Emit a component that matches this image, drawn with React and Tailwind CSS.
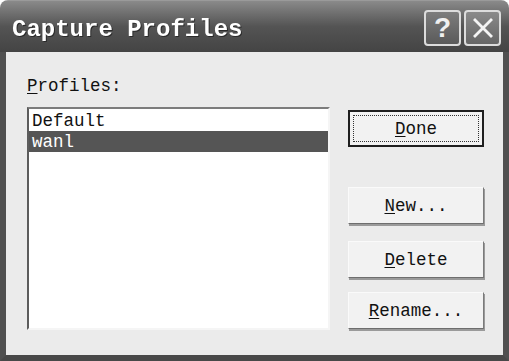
const mono = { fontFamily: '"Liberation Mono", "DejaVu Sans Mono", monospace' };

const DlgButton = ({ children, focused, className = "" }) => (
  <button
    type="button"
    className={`relative w-[136px] h-[37px] text-[17.5px] text-[#111] bg-[#f2f2f2] ${
      focused
        ? "border-2 border-[#1e1e1e]"
        : "border border-t-[#fafafa] border-l-[#fafafa] border-r-[#7a7a7a] border-b-[#6e6e6e] shadow-[1px_2px_0_#9a9a9a]"
    } ${className}`}
    style={mono}
  >
    {focused && (
      <span className="absolute inset-[3px] border border-dotted border-[#333]" />
    )}
    <span className="relative top-[1px]">{children}</span>
  </button>
);

const Key = ({ children }) => <span className="underline underline-offset-2">{children}</span>;

export default function App() {
  return (
    <div className="w-[509px] h-[361px] bg-white" style={mono}>
      <div className="flex flex-col w-full h-full rounded-t-[8px] overflow-hidden">
        {/* title bar */}
        <div className="h-[52px] flex items-center justify-between pl-[12px] pr-[8px] bg-gradient-to-b from-[#8a8a8a] via-[#545454] to-[#444] border-t border-[#9a9a9a]">
          <span className="relative top-[3px] text-[24px] font-bold text-white drop-shadow-[1px_1px_0_#2a2a2a]">
            Capture Profiles
          </span>
          <div className="flex gap-[3px] mt-[2px]">
            <div
              className="w-[37px] h-[36px] rounded-[4px] border-2 border-[#dcdcdc] bg-gradient-to-b from-[#7d7d7d] to-[#5a5a5a] flex items-center justify-center text-[#f0f0f0] text-[28px] font-bold leading-none"
              style={{ fontFamily: '"Liberation Sans", Arial, sans-serif' }}
            >
              ?
            </div>
            <div className="w-[37px] h-[36px] rounded-[4px] border-2 border-[#dcdcdc] bg-gradient-to-b from-[#8a8a8a] to-[#666] flex items-center justify-center">
              <svg width="22" height="22" viewBox="0 0 22 22">
                <path d="M3 3 L19 19 M19 3 L3 19" stroke="#f4f4f4" strokeWidth="2.8" strokeLinecap="square" />
              </svg>
            </div>
          </div>
        </div>

        {/* body */}
        <div className="flex-1 flex bg-[#ebebeb] border-x-[6px] border-b-[6px] border-x-[#505050] border-b-[#484848] pl-[21px] pt-[21px]">
          <div className="flex flex-col">
            <div className="h-[20px] leading-[20px] text-[17.5px] text-[#111] mb-[14px] pt-[3px]">
              <Key>P</Key>rofiles:
            </div>
            <div className="w-[303px] h-[223px] bg-white border-2 border-t-[#7c7c7c] border-l-[#5c5c5c] border-r-[#f5f5f5] border-b-[#f5f5f5] pt-[1px] text-[17.5px]">
              <div className="h-[21px] leading-[23px] px-[3px] text-[#111]">Default</div>
              <div className="h-[21px] leading-[23px] px-[3px] bg-[#555] text-white">wanl</div>
            </div>
          </div>
          <div className="flex flex-col ml-[18px] pt-[37px]">
            <DlgButton focused>
              <Key>D</Key>one
            </DlgButton>
            <DlgButton className="mt-[40px]">
              <Key>N</Key>ew...
            </DlgButton>
            <DlgButton className="mt-[17px]">
              <Key>D</Key>elete
            </DlgButton>
            <DlgButton className="mt-[14px]">
              <Key>R</Key>ename...
            </DlgButton>
          </div>
        </div>
      </div>
    </div>
  );
}
